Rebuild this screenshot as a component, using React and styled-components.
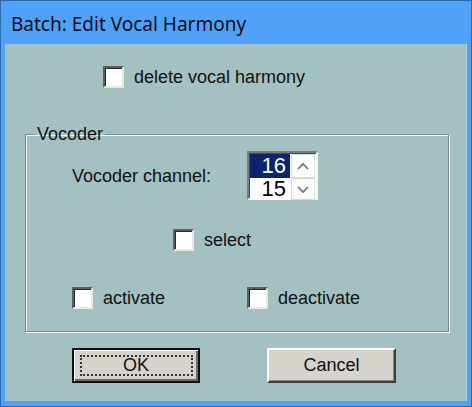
import styled, { createGlobalStyle } from 'styled-components';

const GlobalStyle = createGlobalStyle`
    html, body {
        margin: 0;
        padding: 0;
        background: #ffffff;
    }
    * {
        box-sizing: border-box;
    }
`;

const Window = styled.div`
    width: 472px;
    height: 407px;
    display: flex;
    flex-direction: column;
    background: #4fa2f7;
    border: 1px solid #2d69ad;
    font-family: 'Liberation Sans', Arial, sans-serif;
    color: #111;
`;

const TitleBar = styled.div`
    height: 43px;
    display: flex;
    align-items: center;
    padding-left: 10px;
    padding-top: 2px;
    font-family: 'Noto Sans', 'Open Sans', sans-serif;
    font-size: 19px;
    color: #0c0c14;
`;

const Client = styled.div`
    flex: 1;
    margin: 0 4px 5px 4px;
    background: #a3c1c1;
    display: flex;
    flex-direction: column;
    border-right: 1px solid #b9d0cf;
`;

const CheckRow = styled.label`
    display: flex;
    align-items: center;
    gap: 10px;
    height: 22px;
    font-size: 18px;
    margin-left: ${(p) => p.$indent || 0}px;
    margin-top: ${(p) => p.$top || 0}px;
`;

const Box = styled.span`
    width: 21px;
    height: 22px;
    background: #fff;
    border-style: solid;
    border-width: 2px;
    border-color: #5e5e5e #e8e8e0 #e8e8e0 #5e5e5e;
    box-shadow: inset 1px 1px 0 #2a2a2a;
    flex: none;
`;

const Group = styled.fieldset`
    margin: 36px 0 0 20px;
    width: 424px;
    height: 208px;
    padding: 0;
    border: 1px solid #7d8b8b;
    box-shadow: inset 1px 1px 0 #f4f8f8, 1px 1px 0 #f4f8f8;
`;

const Legend = styled.legend`
    margin-left: 9px;
    padding: 0 2px;
    font-size: 18px;
    line-height: 20px;
`;

const GroupGrid = styled.div`
    display: grid;
    grid-template-columns: 175px auto;
    align-items: center;
    padding-left: 46px;
    padding-top: 7px;
`;

const Label = styled.span`
    font-size: 18px;
    padding-top: 2px;
`;

const Centered = styled.div`
    grid-column: 1 / span 2;
    padding-left: 101px;
    margin-top: 29px;
`;

const BottomRow = styled.div`
    display: contents;
`;

const Spinner = styled.div`
    width: 71px;
    height: 49px;
    background: #fff;
    border-style: solid;
    border-width: 2px;
    border-color: #7b7b7b #f2f2f2 #f2f2f2 #7b7b7b;
    box-shadow: inset 1px 1px 0 #4a4a4a;
    display: grid;
    grid-template-columns: 40px 1fr;
    grid-template-rows: 24px 1fr;
    padding: 1px 1px 0 1px;
`;

const Cell = styled.div`
    display: flex;
    align-items: center;
    justify-content: flex-end;
    padding-right: 4px;
    font-size: 22px;
    line-height: 1;
    background: ${(p) => (p.$selected ? '#0b2470' : '#fff')};
    color: ${(p) => (p.$selected ? '#fff' : '#000')};
`;

const Arrow = styled.div`
    display: flex;
    align-items: center;
    justify-content: center;
    border: 1px solid #d8d8d8;
    margin-left: 1px;
    background: #fbfbfb;
`;

const Buttons = styled.div`
    display: flex;
    gap: 67px;
    margin: 16px 0 0 67px;
`;

const Button = styled.button`
    width: 129px;
    height: 35px;
    padding: 0;
    font-family: 'Liberation Sans', Arial, sans-serif;
    font-size: 18px;
    color: #111;
    background: #d6d2cc;
    border-style: solid;
    border-width: 2px;
    border-color: #fdfdfd #3e3e3e #3e3e3e #fdfdfd;
    box-shadow: inset -1px -1px 0 #8a8783;
    position: relative;

    &.default {
        border: 2px solid #111;
        box-shadow: inset 1px 1px 0 #fdfdfd, inset -2px -2px 0 #6e6b67;
        width: 128px;
    }
`;

const Focus = styled.span`
    position: absolute;
    inset: 5px 5px 5px 6px;
    border: 2px dotted #333;
`;

function Check({ children, indent, top }) {
    return (
        <CheckRow $indent={indent} $top={top}>
            <Box />
            {children}
        </CheckRow>
    );
}

function Chevron({ down }) {
    return (
        <svg width="14" height="9" viewBox="0 0 14 9">
            <polyline
                points={down ? '2,2 7,7 12,2' : '2,7 7,2 12,7'}
                fill="none"
                stroke="#6d6d6d"
                strokeWidth="1.6"
            />
        </svg>
    );
}

export default function App() {
    return (
        <>
            <GlobalStyle />
            <Window>
                <TitleBar>Batch: Edit Vocal Harmony</TitleBar>
                <Client>
                    <Check indent={98} top={22}>
                        delete vocal harmony
                    </Check>
                    <Group>
                        <Legend>Vocoder</Legend>
                        <GroupGrid>
                            <Label>Vocoder channel:</Label>
                            <Spinner>
                                <Cell $selected>16</Cell>
                                <Arrow>
                                    <Chevron />
                                </Arrow>
                                <Cell>15</Cell>
                                <Arrow>
                                    <Chevron down />
                                </Arrow>
                            </Spinner>
                            <Centered>
                                <Check>select</Check>
                            </Centered>
                            <BottomRow>
                                <Check top={36}>activate</Check>
                                <Check top={36}>deactivate</Check>
                            </BottomRow>
                        </GroupGrid>
                    </Group>
                    <Buttons>
                        <Button className="default">
                            <Focus />
                            OK
                        </Button>
                        <Button>Cancel</Button>
                    </Buttons>
                </Client>
            </Window>
        </>
    );
}
